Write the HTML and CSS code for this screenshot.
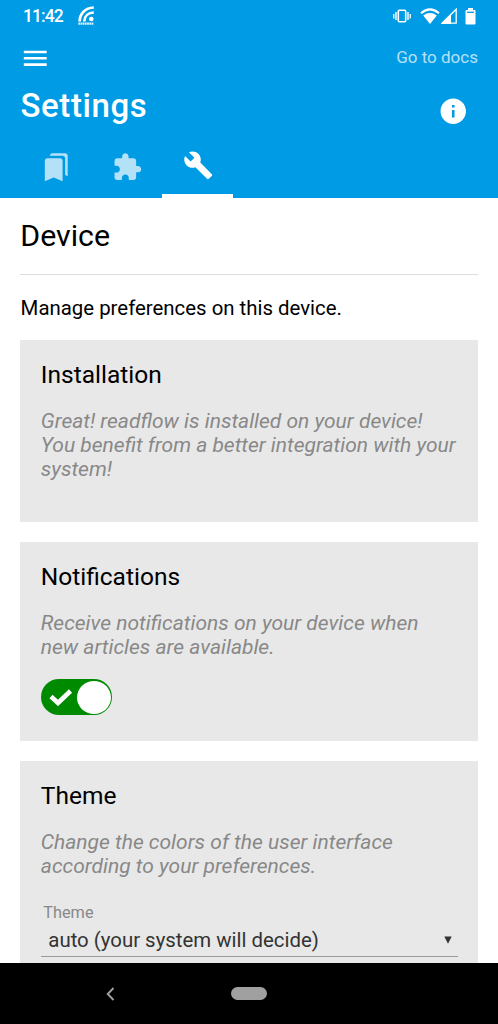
FILE: index.html
```html
<!DOCTYPE html>
<html lang="en">
<head>
<meta charset="utf-8">
<title>Settings</title>
<link rel="stylesheet" href="styles.css">
</head>
<body>
<div class="screen">
  <header class="appbar">
    <div class="status">
      <span class="clock">11:42</span>
      <svg class="cast" width="17" height="20" viewBox="0 0 17 20">
        <g fill="none" stroke="#fff" stroke-width="2.7">
          <path d="M1.600 15.500C1.800 8 7 1.800 15.800 1.500"/>
          <path d="M6.200 15.500C6.400 10.500 10 6.700 15.800 6.500"/>
        </g>
        <circle cx="13.300" cy="13" r="2.300" fill="#fff"/>
        <path d="M.3 17.600h15.500" stroke="#fff" stroke-width="2.400" stroke-dasharray="1.800 .4" opacity=".85"/>
      </svg>
      <div class="indicators">
        <svg width="18" height="14" viewBox="0 0 18 14" fill="none" stroke="#fff">
          <rect x="5.300" y="1.300" width="7.400" height="11.400" rx="1" stroke-width="1.600"/>
          <path d="M3 3v8M15 3v8" stroke-width="1.400"/>
          <path d="M.8 5v4.500M17.200 5v4.500" stroke-width="1.300"/>
        </svg>
        <svg class="wifi" width="20" height="17" viewBox="0 0 20 17">
          <path d="M1 5.200Q10-2.500 19 5.200" fill="none" stroke="#fff" stroke-width="2"/>
          <path d="M3.200 7.400Q10 2.600 16.800 7.400L10 16z" fill="#fff"/>
        </svg>
        <svg class="signal" width="16" height="16" viewBox="0 0 16 16">
          <path d="M15.200 1.200v14H1z" fill="none" stroke="#fff" stroke-width="1.300"/>
          <path d="M0 16L10 6v10z" fill="#fff"/>
        </svg>
        <svg class="battery" width="11" height="17" viewBox="0 0 11 17">
          <path d="M3 0h5v2h1.500q1 0 1 1v12.500q0 1-1 1h-8q-1 0-1-1V3q0-1 1-1H3z" fill="#fff"/>
          <path d="M2 4.300h7" stroke="#009be5" stroke-width="1.300"/>
        </svg>
      </div>
    </div>
    <div class="toolbar">
      <svg class="icon menu" viewBox="0 0 24 24"><path d="M3 18h18v-2H3v2zm0-5h18v-2H3v2zm0-7v2h18V6H3z"/></svg>
      <a class="docs">Go to docs</a>
    </div>
    <div class="heading">
      <h1>Settings</h1>
      <svg class="icon info" viewBox="0 0 24 24"><path d="M12 2C6.480 2 2 6.480 2 12s4.480 10 10 10 10-4.480 10-10S17.520 2 12 2zm1 15h-2v-6h2v6zm0-8h-2V7h2v2z"/></svg>
    </div>
    <nav class="tabs">
      <a class="tab"><svg class="icon" viewBox="0 0 24 24"><path d="M19 18l2 1V3c0-1.100-.9-2-2-2H8.990C7.890 1 7 1.900 7 3h10c1.100 0 2 .9 2 2v13zM15 5H5c-1.100 0-2 .9-2 2v16l7-3 7 3V7c0-1.100-.9-2-2-2z"/></svg></a>
      <a class="tab"><svg class="icon" viewBox="0 0 24 24"><path d="M20.500 11H19V7c0-1.100-.9-2-2-2h-4V3.500C13 2.120 11.880 1 10.500 1S8 2.120 8 3.500V5H4c-1.100 0-1.990.9-1.990 2v3.800H3.500c1.490 0 2.700 1.210 2.700 2.700s-1.210 2.700-2.700 2.700H2V20c0 1.100.9 2 2 2h3.800v-1.500c0-1.490 1.210-2.700 2.700-2.700 1.490 0 2.700 1.210 2.700 2.700V22H17c1.100 0 2-.9 2-2v-4h1.500c1.380 0 2.500-1.120 2.500-2.500S21.880 11 20.500 11z"/></svg></a>
      <a class="tab active"><svg class="icon" viewBox="0 0 24 24"><path d="M22.700 19l-9.100-9.100c.9-2.300.4-5-1.500-6.900-2-2-5-2.400-7.400-1.300L9 6 6 9 1.600 4.700C.4 7.100.9 10.100 2.900 12.100c1.900 1.900 4.600 2.400 6.900 1.500l9.100 9.100c.4.400 1 .4 1.400 0l2.300-2.300c.5-.4.5-1.100.1-1.400z"/></svg></a>
    </nav>
  </header>
  <main class="content">
    <h2>Device</h2>
    <p class="intro">Manage preferences on this device.</p>
    <section class="card installation">
      <h3>Installation</h3>
      <p>Great! readflow is installed on your device!<br>You benefit from a better integration with your system!</p>
    </section>
    <section class="card notifications">
      <h3>Notifications</h3>
      <p>Receive notifications on your device when new articles are available.</p>
      <div class="switch">
        <svg width="24" height="18" viewBox="0 0 24 18"><path d="M2 8.500l7 6.500L21.500 3" fill="none" stroke="#fff" stroke-width="4.600"/></svg>
        <span class="knob"></span>
      </div>
    </section>
    <section class="card">
      <h3>Theme</h3>
      <p>Change the colors of the user interface according to your preferences.</p>
      <div class="field">
        <label>Theme</label>
        <div class="select">
          <span>auto (your system will decide)</span>
          <svg width="8" height="8" viewBox="0 0 8 8"><path d="M.3.500h7.400L4 7.700z" fill="#333"/></svg>
        </div>
      </div>
    </section>
  </main>
  <footer class="navbar">
    <svg class="back" width="9" height="14" viewBox="0 0 9 14"><path d="M7.500 1L1.700 7l5.800 6" fill="none" stroke="#a0a0a0" stroke-width="1.900"/></svg>
    <span class="home"></span>
  </footer>
</div>
</body>
</html>
```
FILE: styles.css
```css
* { box-sizing: border-box; }
body {
  margin: 0;
  font-family: Roboto, "Liberation Sans", sans-serif;
  font-size: 20.4px;
  color: #000;
  background: #fff;
}
h1, h2, h3, p { margin: 0; font-weight: 400; }
svg { display: block; flex: none; }
.screen { width: 498px; height: 1024px; display: flex; flex-direction: column; overflow: hidden; }

.appbar { height: 197.600px; background: #009be5; color: #fff; flex: none; display: flex; flex-direction: column; }
.icon { width: 30.500px; height: 30.500px; fill: #fff; }
.status { height: 32px; display: flex; align-items: center; padding: 0 22px 0 23px; }
.clock { width: 40px; font-size: 17.500px; font-weight: 500; line-height: 32px; letter-spacing: -.9px; white-space: nowrap; }
.cast { margin-left: 15px; margin-top: 0; }
.indicators { display: flex; align-items: center; margin-left: auto; height: 30px; }
.wifi { margin-left: 9px; }
.signal { margin-left: 1px; }
.battery { margin-left: 8px; }
.toolbar { height: 51px; display: flex; align-items: center; justify-content: space-between; padding: 0 20px; }
.menu { margin-top: 1.500px; }
.docs { font-size: 17px; opacity: .7; margin-top: -2px; }
.heading { height: 54px; display: flex; justify-content: space-between; padding: 0 30px 0 20.500px; }
h1 { font-size: 33px; font-weight: 500; line-height: 46px; letter-spacing: .6px; }
.info { margin-top: 13px; }
.tabs { flex: 1; display: flex; padding-left: 20.300px; }
.tab { width: 71px; display: flex; align-items: center; justify-content: center; }
.tab .icon { opacity: .7; }
.active { border-bottom: 4px solid #fff; }
.active .icon { opacity: 1; }

.content { flex: 1; min-height: 0; overflow: hidden; padding: 0 20px 0 20.300px; }
h2 { font-size: 30.300px; line-height: 36px; padding: 20.500px 0 20px; border-bottom: 1.300px solid #ddd; }
.intro { line-height: 24px; margin: 21px 0 20.400px; padding-left: .3px; }
.card { background: #e8e8e8; padding: 20px 20.500px; margin-bottom: 20.400px; }
.card h3 { font-size: 24.500px; line-height: 30px; margin-bottom: 19px; }
.card p { font-size: 21px; line-height: 24px; font-style: italic; color: #888; }
.installation { height: 181.600px; }
.notifications { height: 198.400px; }
.switch { width: 71px; height: 35.500px; margin-top: 20px; border-radius: 18px; background: #008a00; display: flex; align-items: center; justify-content: space-between; padding: 0 1px 0 8px; }
.knob { width: 34px; height: 33px; border-radius: 50%; background: #fff; }
.field { margin-top: 25px; }
.field label { display: block; font-size: 16.300px; line-height: 20px; padding-left: 2.500px; color: #888; }
.select { display: flex; justify-content: space-between; align-items: center; height: 34px; padding: 0 6px 0 7.500px; border-bottom: 1px solid #999; color: #333; }

.navbar { height: 61px; flex: none; background: #000; display: flex; align-items: center; padding-left: 106px; }
.home { width: 36px; height: 13px; margin-left: 116px; border-radius: 7px; background: #a0a0a0; }
```
